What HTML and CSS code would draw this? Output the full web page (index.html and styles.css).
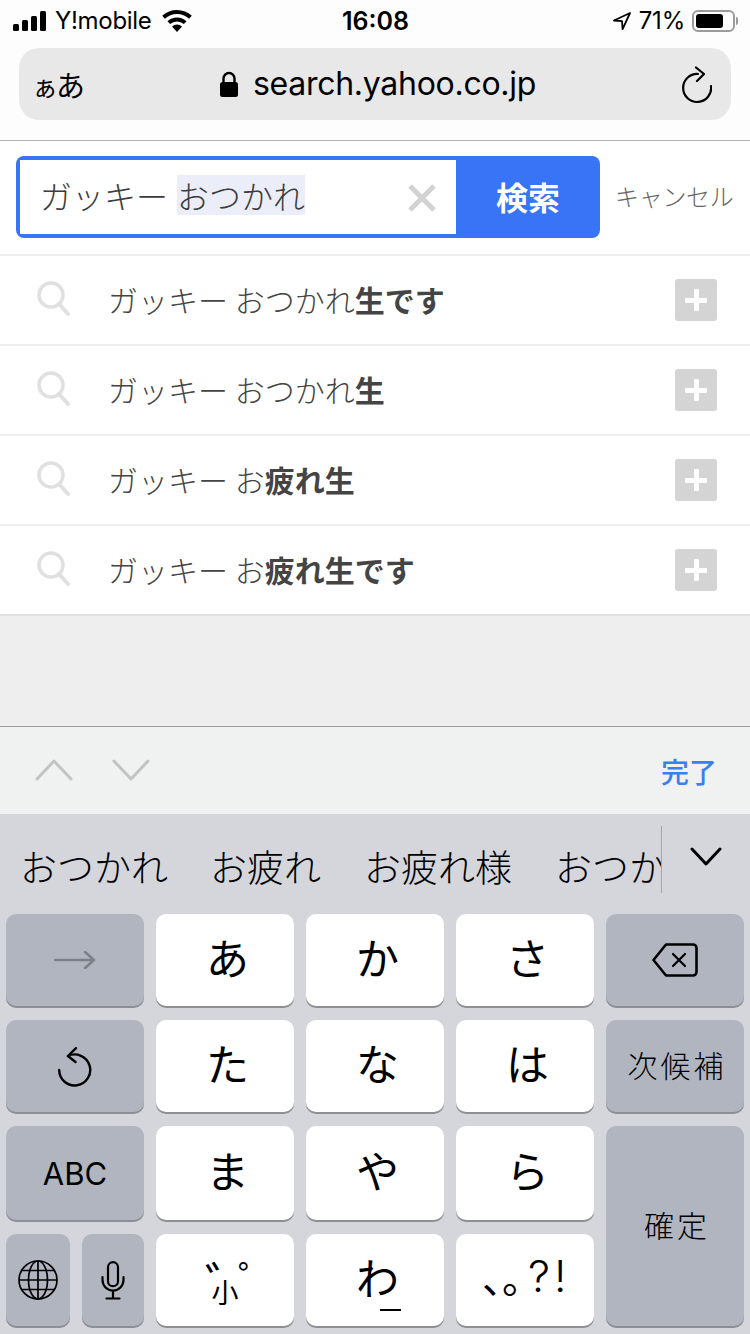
FILE: index.html
```html
<!DOCTYPE html>
<html lang="ja">
<head>
<meta charset="utf-8">
<title>Yahoo search</title>
<link rel="stylesheet" href="styles.css">
</head>
<body>
<div class="phone">
  <header class="chrome">
    <div class="status">
      <div class="status-left">
        <svg class="signal" width="34" height="20" viewBox="0 0 34 20"><rect x="0" y="13" width="6" height="7" rx="1.500"/><rect x="9" y="9" width="6" height="11" rx="1.500"/><rect x="18" y="5" width="6" height="15" rx="1.500"/><rect x="27" y="0" width="6" height="20" rx="1.500"/></svg>
        <span class="carrier">Y!mobile</span>
        <svg class="wifi" width="30" height="22" viewBox="0 0 30 22"><path d="M15 22l-5-5.600a7.500 7.500 0 0 1 10 0z"/><path d="M15 7.500c3.700 0 7 1.400 9.500 3.700l-2.600 2.900a10.200 10.200 0 0 0-13.800 0l-2.600-2.900A14 14 0 0 1 15 7.500z"/><path d="M15 0c5.700 0 10.900 2.200 14.800 5.800l-2.700 3A18 18 0 0 0 15 4 18 18 0 0 0 2.900 8.800l-2.700-3A21.800 21.800 0 0 1 15 0z"/></svg>
      </div>
      <span class="clock">16:08</span>
      <div class="status-right">
        <svg class="loc" width="20" height="20" viewBox="0 0 20 20"><path d="M18 2L2 9.500l8 .6.600 8z" fill="none" stroke="#000" stroke-width="1.800" stroke-linejoin="round"/></svg>
        <span class="pct">71%</span>
        <span class="battery"><span class="battery-fill"></span></span>
      </div>
    </div>
    <div class="address">
      <span class="aa"><small>ぁ</small>あ</span>
      <div class="url">
        <svg width="20" height="27" viewBox="0 0 20 27"><path d="M4.500 12V7.500a5.500 5.500 0 0 1 11 0V12" fill="none" stroke="#000" stroke-width="2.400"/><rect x="1" y="11" width="18" height="15" rx="2.500"/></svg>
        <span>search.yahoo.co.jp</span>
      </div>
      <svg class="reload" width="32" height="38" viewBox="0 0 32 38"><path d="M18 8A14 14 0 1 0 31 20" fill="none" stroke="#000" stroke-width="2.200" stroke-linecap="round"/><path d="M16 1.500L24 8l-7 7" fill="none" stroke="#000" stroke-width="2.200" stroke-linecap="round" stroke-linejoin="round"/></svg>
    </div>
  </header>

  <section class="search">
    <div class="box">
      <div class="field">
        <span class="query">ガッキー <mark>おつかれ</mark></span>
        <svg class="clear" width="30" height="30" viewBox="0 0 30 30"><path d="M3 3l24 24M27 3L3 27" stroke="#d2d2d2" stroke-width="5"/></svg>
      </div>
      <div class="go">検索</div>
    </div>
    <span class="cancel">キャンセル</span>
  </section>

  <ul class="suggest">
    <li class="row">
      <svg class="lens" width="36" height="36" viewBox="0 0 36 36"><circle cx="15" cy="14" r="12" fill="none" stroke="#e0e0e0" stroke-width="3.500"/><path d="M23 23l9 10" stroke="#e0e0e0" stroke-width="4" stroke-linecap="round"/></svg>
      <span class="text">ガッキー おつかれ<b>生です</b></span>
      <span class="plus"><span class="plus-h"></span><span class="plus-v"></span></span>
    </li>
    <li class="row">
      <svg class="lens" width="36" height="36" viewBox="0 0 36 36"><circle cx="15" cy="14" r="12" fill="none" stroke="#e0e0e0" stroke-width="3.500"/><path d="M23 23l9 10" stroke="#e0e0e0" stroke-width="4" stroke-linecap="round"/></svg>
      <span class="text">ガッキー おつかれ<b>生</b></span>
      <span class="plus"><span class="plus-h"></span><span class="plus-v"></span></span>
    </li>
    <li class="row">
      <svg class="lens" width="36" height="36" viewBox="0 0 36 36"><circle cx="15" cy="14" r="12" fill="none" stroke="#e0e0e0" stroke-width="3.500"/><path d="M23 23l9 10" stroke="#e0e0e0" stroke-width="4" stroke-linecap="round"/></svg>
      <span class="text">ガッキー お<b>疲れ生</b></span>
      <span class="plus"><span class="plus-h"></span><span class="plus-v"></span></span>
    </li>
    <li class="row last">
      <svg class="lens" width="36" height="36" viewBox="0 0 36 36"><circle cx="15" cy="14" r="12" fill="none" stroke="#e0e0e0" stroke-width="3.500"/><path d="M23 23l9 10" stroke="#e0e0e0" stroke-width="4" stroke-linecap="round"/></svg>
      <span class="text">ガッキー お<b>疲れ生です</b></span>
      <span class="plus"><span class="plus-h"></span><span class="plus-v"></span></span>
    </li>
  </ul>

  <div class="spacer"></div>

  <div class="toolbar">
    <div class="arrows">
      <svg width="38" height="22" viewBox="0 0 38 22"><path d="M2 20L19 2l17 18" fill="none" stroke="#c2c3c3" stroke-width="3" stroke-linecap="round" stroke-linejoin="round"/></svg>
      <svg width="38" height="22" viewBox="0 0 38 22"><path d="M2 2l17 18L36 2" fill="none" stroke="#c2c3c3" stroke-width="3" stroke-linecap="round" stroke-linejoin="round"/></svg>
    </div>
    <span class="done">完了</span>
  </div>

  <div class="keyboard">
    <div class="candidates">
      <div class="cand-list">
        <span class="cand-first">おつかれ</span><span>お疲れ</span><span>お疲れ様</span><span>おつか</span>
      </div>
      <div class="cand-more">
        <svg width="32" height="20" viewBox="0 0 32 20"><path d="M2 2l14 15L30 2" fill="none" stroke="#000" stroke-width="3" stroke-linecap="round" stroke-linejoin="round"/></svg>
      </div>
    </div>
    <div class="keys">
      <div class="key dark">
        <svg width="42" height="18" viewBox="0 0 42 18"><path d="M1 9h39M31 1l9 8-9 8" fill="none" stroke="#7c7f87" stroke-width="2.500" stroke-linecap="round" stroke-linejoin="round"/></svg>
      </div>
      <div class="key kana"><span>あ</span></div>
      <div class="key kana"><span>か</span></div>
      <div class="key kana"><span>さ</span></div>
      <div class="key dark">
        <svg width="46" height="34" viewBox="0 0 46 34"><path d="M14 1.500h27a3.500 3.500 0 0 1 3.500 3.500v24a3.500 3.500 0 0 1-3.500 3.500H14L1.500 17z" fill="none" stroke="#000" stroke-width="2.600" stroke-linejoin="round"/><path d="M21 11l12 12M33 11L21 23" stroke="#000" stroke-width="2.200" stroke-linecap="round"/></svg>
      </div>

      <div class="key dark">
        <svg class="undo" width="34" height="40" viewBox="0 0 34 40"><path d="M10 9A15.500 15.500 0 1 1 1.200 23" fill="none" stroke="#000" stroke-width="2.400" stroke-linecap="round"/><path d="M18 1.200l-8 7.800 7.500 6" fill="none" stroke="#000" stroke-width="2.400" stroke-linecap="round" stroke-linejoin="round"/></svg>
      </div>
      <div class="key kana"><span>た</span></div>
      <div class="key kana"><span>な</span></div>
      <div class="key kana"><span>は</span></div>
      <div class="key dark label spaced"><span>次候補</span></div>

      <div class="key dark label">ABC</div>
      <div class="key kana"><span>ま</span></div>
      <div class="key kana"><span>や</span></div>
      <div class="key kana"><span>ら</span></div>
      <div class="key dark label spaced confirm"><span>確定</span></div>

      <div class="pair">
        <div class="key dark">
          <svg width="40" height="40" viewBox="0 0 40 40" fill="none" stroke="#000" stroke-width="1.700"><circle cx="20" cy="20" r="19"/><ellipse cx="20" cy="20" rx="9.500" ry="19"/><path d="M20 1v38M1 20h38M4 10.500h32M4 29.500h32"/></svg>
        </div>
        <div class="key dark">
          <svg width="24" height="39" viewBox="0 0 24 39" fill="none" stroke="#000" stroke-width="2.200" stroke-linecap="round"><rect x="7" y="1.200" width="10" height="24" rx="5"/><path d="M1.500 16v3a10.500 10.500 0 0 0 21 0v-3M12 30v7M5.500 37.500h13"/></svg>
        </div>
      </div>
      <div class="key kana small-mark"><span class="daku">゛</span><span class="ko">小</span><span class="han">゜</span></div>
      <div class="key kana wa-key"><span>わ</span></div>
      <div class="key kana punct"><span class="marks">、。</span><span class="qm">?!</span></div>
    </div>
  </div>
</div>
</body>
</html>
```
FILE: styles.css
```css
* { box-sizing: border-box; }
html, body { margin: 0; padding: 0; }
body { font-family: "Noto Sans CJK JP", "Liberation Sans", sans-serif; background: #fff; }
.phone { width: 750px; height: 1334px; overflow: hidden; display: flex; flex-direction: column; background: #fff; }

.chrome { height: 141px; background: #fdfdfd; border-bottom: 1px solid #b4b4b4; flex: none; }
.status { height: 48px; display: flex; align-items: center; justify-content: space-between; padding: 0 15px 6px 13px; position: relative; color: #000; }
.status-left { display: flex; align-items: center; gap: 8px; }
.status-right { display: flex; align-items: center; gap: 7px; }
.signal, .wifi { fill: #000; }
.carrier { font: 400 24px/1 Inter, "Liberation Sans", sans-serif; letter-spacing: -.3px; margin-right: 2px; }
.clock { font: 600 25px/1 Inter, "Liberation Sans", sans-serif; position: absolute; left: 342px; top: 9px; }
.pct { font: 400 24px/1 Inter, "Liberation Sans", sans-serif; letter-spacing: -.2px; }
.battery { width: 43px; height: 22px; border: 2px solid #9b9b9b; border-radius: 6px; padding: 2px; display: block; position: relative; }
.battery::after { content: ""; position: absolute; right: -5px; top: 5px; width: 2px; height: 8px; background: #9b9b9b; border-radius: 0 2px 2px 0; }
.battery-fill { display: block; width: 27px; height: 14px; background: #000; border-radius: 3px; }

.address { margin: 0 19px; height: 72px; background: #e8e8e8; border-radius: 20px; display: flex; align-items: center; padding: 0 19px 0 13px; position: relative; }
.aa { font-size: 29px; line-height: 1; color: #000; letter-spacing: -2px; }
.aa small { font-size: 26px; }
.url { position: absolute; left: 200px; top: 0; height: 72px; display: flex; align-items: center; gap: 14px; font: 400 32px/1 Inter, "Liberation Sans", sans-serif; letter-spacing: -.28px; color: #000; }
.reload { margin-left: auto; margin-top: 2px; }

.search { height: 115px; flex: none; border-bottom: 2px solid #eeeeee; display: flex; align-items: flex-start; padding: 15px 0 0 16px; }
.box { width: 584px; height: 82px; background: #3974f6; border-radius: 8px; padding: 4px 0 4px 4px; display: flex; }
.field { width: 436px; height: 74px; background: #fff; display: flex; align-items: center; justify-content: space-between; padding: 0 19px 0 20px; }
.query { font-size: 32px; font-weight: 300; line-height: 40px; color: #3c3c3c; white-space: pre; margin-bottom: 4px; }
.query mark { background: #ebeef8; color: #3c3c3c; display: inline-block; margin-left: 2px; }
.clear { flex: none; margin-top: 2px; }
.go { flex: 1; display: flex; align-items: center; justify-content: center; color: #fff; font-size: 32px; font-weight: 700; padding-bottom: 2px; }
.cancel { font-size: 24px; font-weight: 300; color: #666; margin: 22px 0 0 15px; white-space: nowrap; letter-spacing: -.3px; }

.suggest { list-style: none; margin: 0; padding: 0; flex: none; }
.row { height: 90px; border-bottom: 2px solid #eeeeee; display: flex; align-items: center; padding: 0 33px 0 36px; }
.row.last { border-bottom-color: #e0e0e0; }
.lens { flex: none; margin-bottom: 2px; }
.text { font-size: 30px; font-weight: 300; color: #444; margin-left: 36px; margin-bottom: 2px; }
.text b { font-weight: 700; color: #444; }
.plus { margin-left: auto; width: 42px; height: 42px; background: #d4d4d4; border-radius: 3px; position: relative; }
.plus-h, .plus-v { position: absolute; background: #fff; border-radius: 1px; }
.plus-h { left: 10px; top: 19px; width: 22px; height: 5px; }
.plus-v { left: 19px; top: 10px; width: 5px; height: 22px; }

.spacer { flex: 1; background: #eeeeee; }

.toolbar { height: 88px; flex: none; background: #f0f2f1; border-top: 1px solid #9c9c9c; display: flex; align-items: center; justify-content: space-between; padding: 0 33px 0 35px; }
.arrows { display: flex; gap: 39px; margin-bottom: 2px; }
.done { font-size: 28px; font-weight: 500; color: #3a7ff2; }

.keyboard { height: 520px; flex: none; background: #d5d6dc; }
.candidates { height: 100px; display: flex; }
.cand-list { width: 662px; height: 67px; margin-top: 12px; overflow: hidden; white-space: nowrap; display: flex; gap: 43px; padding: 0 0 0 20px; border-right: 1px solid #a4a5aa; font-size: 37px; font-weight: 300; line-height: 80px; color: #000; }
.cand-first { margin-right: -1px; }
.cand-more { flex: 1; padding: 33px 0 0 28px; }

.keys { display: grid; grid-template-columns: repeat(5, 138px); grid-template-rows: 93px 93px 95px 93px; column-gap: 12px; row-gap: 13px; padding-left: 6px; }
.key { border-radius: 10px; display: flex; align-items: center; justify-content: center; box-shadow: 0 2px 0 #8e8f94; height: calc(100% - 1px); color: #000; }
.dark { background: #b1b5bf; }
.kana { background: #fff; font-size: 43px; font-weight: 400; padding: 0 0 8px 5px; }
.label { font-size: 31px; font-family: Inter, "Noto Sans CJK JP", sans-serif; font-weight: 400; }
.spaced { font-size: 30px; letter-spacing: 3px; font-family: "Noto Sans CJK JP", sans-serif; font-weight: 300; padding: 0 0 4px 4px; }
.undo { margin-top: 2px; }
.confirm { grid-row: 3 / span 2; grid-column: 5; }
.pair { display: grid; grid-template-columns: 64px 62px; column-gap: 12px; }
.pair .key { height: calc(100% - 1px); }
.small-mark { position: relative; padding: 0; }
.ko { font-size: 27px; margin-top: 22px; }
.daku, .han { position: absolute; line-height: 1; }
.daku { font-size: 48px; left: 49px; top: 23px; }
.han { font-size: 38px; left: 82px; top: 24px; }
.wa-key { position: relative; }
.wa-key::after { content: ""; position: absolute; left: 74px; top: 75px; width: 21px; height: 2px; background: #000; }
.punct { padding: 0 0 0 26px; justify-content: flex-start; }
.marks { font-size: 40px; font-weight: 400; margin-right: -14px; margin-bottom: 8px; }
.qm { font: 300 44px/1 Inter, "Liberation Sans", sans-serif; letter-spacing: 4px; margin-bottom: 8px; }
```
